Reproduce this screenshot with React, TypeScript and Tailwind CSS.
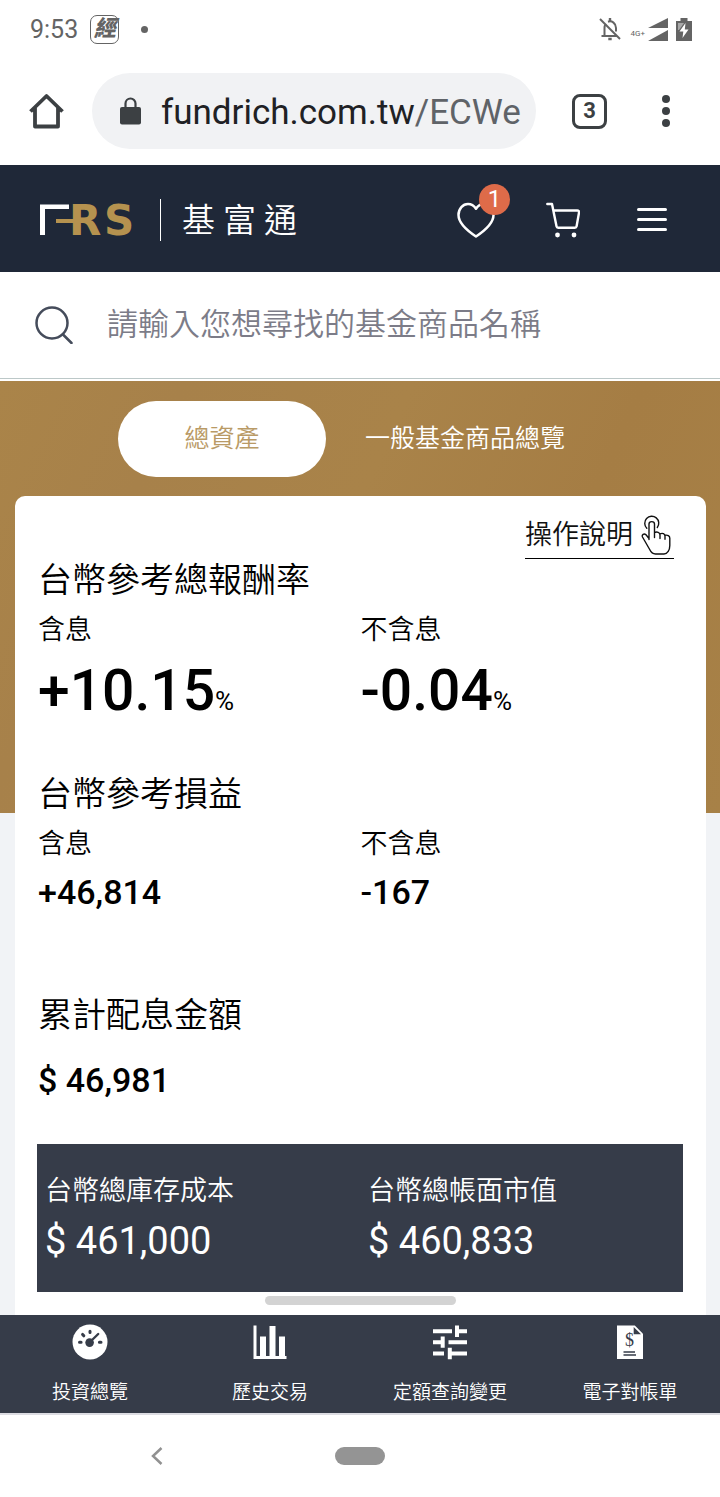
import type { ReactNode } from 'react'

const GaugeIcon = () => (
  <svg viewBox="0 0 36 36" className="h-[36px] w-[36px]" aria-hidden="true">
    <circle cx="18" cy="18" r="17.5" fill="#fff" />
    <g stroke="#363c49" strokeWidth="3" strokeLinecap="round">
      <path d="M7.5 18.2h1.6M27.4 18.2h1.6M18 7.2v1.4M10.6 10.4l1.2 1.4" />
      <path d="M18 18l8.2-8" strokeWidth="2.4" />
    </g>
    <circle cx="17.6" cy="18.6" r="4.3" fill="#363c49" />
  </svg>
)

const BarsIcon = () => (
  <svg viewBox="0 0 36 36" className="h-[36px] w-[36px]" fill="#fff" aria-hidden="true">
    <path d="M1.5 1.5h3v30.500h30v3h-33zM8 12.500h6v19.500h-6zM17.500 2h6v30h-6zM27 12.500h6v19.500h-6z" />
  </svg>
)

const SlidersIcon = () => (
  <svg viewBox="0 0 36 36" className="h-[36px] w-[36px]" fill="#fff" aria-hidden="true">
    <path d="M1 5.300h19v3.900h-19zM23 1.500h4v3.800h8v3.900h-8v3.800h-4zM16.500 16.300h18.500v3.900h-18.500zM1 16.300h7.700v-3.800h4v11.200h-4v-3.500h-7.700zM1 27.500h11v3.900h-11zM15.800 23.700h4v3.800h15.200v3.900h-15.200v3.800h-4z" />
  </svg>
)

const StatementIcon = () => (
  <svg viewBox="0 0 36 36" className="h-[36px] w-[36px]" aria-hidden="true">
    <path d="M5 1.500h17.800l8.200 8.300v25.200h-26z" fill="#fff" />
    <path d="M21.700 3v7.200h7.300z" fill="#363c49" />
    <text x="17.500" y="22" textAnchor="middle" fontFamily="Liberation Serif" fontSize="18" fill="#363c49">
      $
    </text>
    <path d="M11.500 28h11.500M11.500 31h12.500" stroke="#363c49" strokeWidth="1.300" />
  </svg>
)

const returns = [
  { label: '含息', value: '+10.15' },
  { label: '不含息', value: '-0.04' },
]

const profits = [
  { label: '含息', value: '+46,814' },
  { label: '不含息', value: '-167' },
]

const holdings = [
  { label: '台幣總庫存成本', value: '$ 461,000' },
  { label: '台幣總帳面市值', value: '$ 460,833' },
]

const tabs: { label: string; icon: ReactNode }[] = [
  { label: '投資總覽', icon: <GaugeIcon /> },
  { label: '歷史交易', icon: <BarsIcon /> },
  { label: '定額查詢變更', icon: <SlidersIcon /> },
  { label: '電子對帳單', icon: <StatementIcon /> },
]

function StatusBar() {
  return (
    <div className="flex h-[58px] items-center pr-[28px] pl-[30px] text-[#646464]">
      <span className="pt-[2px] text-[25px] leading-[30px]">9:53</span>
      <span className="ml-[12px] flex h-[29px] w-[29px] items-center justify-center rounded-[7px] border border-[#646464] text-[22px] leading-[26px] font-black italic">
        經
      </span>
      <span className="ml-[22px] h-[7px] w-[7px] rounded-full bg-[#646464]" />

      <div className="ml-auto flex items-end">
        <svg viewBox="0 0 24 24" className="h-[24px] w-[24px]" fill="none" stroke="currentColor" strokeWidth="2" aria-hidden="true">
          <path d="M2 2l20 20" />
          <path d="M3.500 19h15.500M6.500 19v-8c0-1.600.4-2.900 1.200-4M10 4.700c4-1.300 8 1.700 8 6.300v3.500" />
          <path d="M12 1v3M10.300 22h3.400" strokeWidth="2.400" />
        </svg>
        <span className="ml-[9px] text-[8px] leading-[14px]">4G+</span>
        <svg viewBox="0 0 20 23" className="ml-[3px] h-[23px] w-[20px]" fill="currentColor" aria-hidden="true">
          <path d="M20 0v10h-20zM20 12v11h-20z" />
        </svg>
        <svg viewBox="0 0 16 23" className="ml-[8px] h-[23px] w-[16px]" fill="currentColor" aria-hidden="true">
          <path d="M0 3h4.500v-3h7v3h4.500v20h-16z" />
          <path d="M2 5h6l-5 7h-1z" fill="#a8a8a8" />
          <path d="M9.500 5l-6 8.500h3.800l-.8 6.500 6-8.500h-3.700z" fill="#fff" />
        </svg>
      </div>
    </div>
  )
}

function BrowserBar() {
  return (
    <div className="flex h-[107px] items-center pr-[50px] pb-[1px] pl-[29px] text-[#3c4043]">
      <button aria-label="Home">
        <svg viewBox="0 0 35 36" className="h-[36px] w-[35px]" fill="none" stroke="currentColor" strokeWidth="3.800" strokeLinejoin="round" aria-hidden="true">
          <path d="M1.500 18.500l16-15.500 16 15.500M6 15v18.500h23v-18.500" />
        </svg>
      </button>
      <button className="ml-[28px] flex h-[76px] min-w-0 flex-1 items-center rounded-full bg-[#f1f2f4] pr-[8px] pl-[28px] text-left">
        <svg viewBox="0 0 21 28" className="h-[28px] w-[21px] shrink-0" aria-hidden="true">
          <rect y="10" width="21" height="17.500" rx="2" fill="currentColor" />
          <path d="M5.500 11v-4.500a5 5 0 0 1 10 0v4.500" fill="none" stroke="currentColor" strokeWidth="2.200" />
        </svg>
        <span className="ml-[20px] min-w-0 flex-1 overflow-hidden pt-[3px] text-[35px] leading-[48px] whitespace-nowrap text-[#202124]">
          fundrich.com.tw<span className="text-[#5f6368]">/ECWe</span>
        </span>
      </button>
      <button className="ml-[36px] flex h-[35px] w-[35px] items-center justify-center rounded-[8px] border-[3px] border-[#3c4043] text-[22px] leading-[24px] font-bold">
        3
      </button>
      <button aria-label="More" className="ml-[55px] flex flex-col gap-[4px]">
        <span className="h-[8px] w-[8px] rounded-full bg-[#3c4043]" />
        <span className="h-[8px] w-[8px] rounded-full bg-[#3c4043]" />
        <span className="h-[8px] w-[8px] rounded-full bg-[#3c4043]" />
      </button>
    </div>
  )
}

function SiteHeader() {
  return (
    <header className="flex h-[107px] items-center bg-[#1f2838] pt-[2px] pr-[53px] pl-[40px] text-white">
      <a href="#" className="flex items-center">
        <svg viewBox="0 0 100 32" className="h-[32px] w-[100px] overflow-visible" aria-hidden="true">
          <path d="M0 0.500h29v4.500h-24v26h-5z" fill="#fff" />
          <path d="M16 15h18v4h-18z" fill="#b5924f" />
          <text x="29 64" y="31" fontFamily="DejaVu Sans" fontSize="42" fontWeight="bold" fill="#b5924f">
            RS
          </text>
        </svg>
        <span className="ml-[20px] h-[42px] w-px bg-white" />
        <span className="ml-[21px] flex gap-[8px] pt-[3px] text-[33px] leading-[42px] font-[350]">
          <span>基</span>
          <span>富</span>
          <span>通</span>
        </span>
      </a>
      <div className="ml-auto flex items-center">
        <button aria-label="Favorites" className="relative">
          <svg viewBox="0 0 38 36" className="h-[36px] w-[38px]" fill="none" stroke="currentColor" strokeWidth="2.500" strokeLinejoin="round" aria-hidden="true">
            <path d="M19 34.500c-9-6-17.500-13-17.500-21.500 0-6.500 4.500-11 9.500-11 3.500 0 6 1.700 8 4.700 2-3 4.500-4.700 8-4.700 5 0 9.500 4.500 9.500 11 0 8.500-8.500 15.500-17.500 21.500z" />
          </svg>
          <span className="absolute -top-[18px] -right-[15px] flex h-[31px] w-[31px] items-center justify-center rounded-full bg-[#de6b49] text-[24px] leading-[30px]">
            1
          </span>
        </button>
        <button aria-label="Cart" className="ml-[51px]">
          <svg viewBox="0 0 34 36" className="h-[36px] w-[34px]" fill="none" stroke="currentColor" strokeWidth="2.400" strokeLinecap="round" strokeLinejoin="round" aria-hidden="true">
            <path d="M1.300 2h4.700l4.500 22.300c.2 1 .8 1.500 1.700 1.500h16.600c1 0 1.600-.5 1.800-1.500l2.400-13.500c.2-1.500-.5-2.300-1.700-2.300h-24" />
            <circle cx="11.500" cy="33" r="2.400" fill="currentColor" stroke="none" />
            <circle cx="28" cy="33" r="2.400" fill="currentColor" stroke="none" />
          </svg>
        </button>
        <button aria-label="Menu" className="ml-[57px] flex flex-col gap-[7px]">
          <span className="h-[3px] w-[30px] rounded-full bg-white" />
          <span className="h-[3px] w-[30px] rounded-full bg-white" />
          <span className="h-[3px] w-[30px] rounded-full bg-white" />
        </button>
      </div>
    </header>
  )
}

function SearchBar() {
  return (
    <div className="flex h-[109px] flex-col">
      <label className="flex flex-1 items-center border-b border-[#bcc8c8] pl-[35px]">
        <svg viewBox="0 0 38 38" className="h-[38px] w-[38px] shrink-0" fill="none" stroke="#454c5b" strokeWidth="2.500" strokeLinecap="round" aria-hidden="true">
          <circle cx="17" cy="17" r="15.500" />
          <path d="M28 28.500l8.500 8.500" />
        </svg>
        <input
          type="search"
          aria-label="搜尋"
          placeholder="請輸入您想尋找的基金商品名稱"
          className="ml-[34px] min-w-0 flex-1 text-[31px] leading-[44px] font-[350] outline-none placeholder:text-[#7c7c88]"
        />
      </label>
      <div className="h-[2px] bg-white" />
    </div>
  )
}

export default function App() {
  return (
    <div className="bg-white font-['Roboto','Noto_Sans_CJK_TC',sans-serif] text-black">
      <StatusBar />
      <BrowserBar />
      <SiteHeader />
      <SearchBar />

      <main className="bg-[#f1f3f6] bg-[linear-gradient(115deg,#aa8449_0%,#a7814a_20%,#a98349_45%,#a57d44_70%,#a78147_100%)] bg-[length:100%_432px] bg-no-repeat pt-[20px] pr-[14px] pl-[15px]">
        <div className="flex h-[76px] pl-[103px]">
          <button className="w-[208px] rounded-full bg-white text-[25px] leading-[36px] font-[350] text-[#b99a66]">
            總資產
          </button>
          <button className="ml-[39px] text-[25px] leading-[36px] font-[350] text-white">
            一般基金商品總覽
          </button>
        </div>

        <div className="mt-[19px] rounded-t-[10px] bg-white pt-[17px] pr-[23px] pb-[10px] pl-[22px]">
          <div className="flex justify-end pr-[9px]">
            <a href="#" className="flex h-[46px] items-center gap-[8px] border-b border-black pr-[3px] pb-[2px] text-[27px] leading-[36px] font-[350] text-[#111]">
              操作說明
              <svg viewBox="0 0 30 40" className="h-[40px] w-[30px]" fill="none" stroke="currentColor" strokeWidth="1.400" strokeLinecap="round" strokeLinejoin="round" aria-hidden="true">
                <path d="M5.800 13.200a7 7 0 1 1 10.500-.7" />
                <path d="M8 24.500v-15.500c0-3.200 5.500-3.200 5.500 0v8.500M13.500 22.500v-5c2.500-1 5.500-.3 5.500 2.500v3.500M19 18.800c2.500-1 5-.2 5 2.500v3M24 20.300c2.500-.6 4.800.5 4.800 3v7.200c0 4.500-2.300 8.500-5.800 8.500h-8.500c-3 0-4.500-1.700-5.800-4.500l-7.200-12.500c-1-2.300 1.500-4 3.500-2.200l3 3.700" />
              </svg>
            </a>
          </div>

          <section className="pl-px">
            <h2 className="text-[34px] leading-[42px] font-[350]">台幣參考總報酬率</h2>
            <dl className="mt-[11px] grid grid-cols-2">
              {returns.map((item) => (
                <div key={item.label}>
                  <dt className="text-[27px] leading-[36px] font-[350]">{item.label}</dt>
                  <dd className="mt-[11px] text-[57px] leading-[64px] font-medium">
                    {item.value}
                    <span className="text-[26px] leading-none font-normal">%</span>
                  </dd>
                </div>
              ))}
            </dl>
          </section>

          <section className="mt-[50px] pl-px">
            <h2 className="text-[34px] leading-[42px] font-[350]">台幣參考損益</h2>
            <dl className="mt-[11px] grid grid-cols-2">
              {profits.map((item) => (
                <div key={item.label}>
                  <dt className="text-[27px] leading-[36px] font-[350]">{item.label}</dt>
                  <dd className="mt-[8px] text-[34px] leading-[44px] font-medium">{item.value}</dd>
                </div>
              ))}
            </dl>
          </section>

          <section className="mt-[80px] pl-px">
            <h2 className="text-[34px] leading-[42px] font-[350]">累計配息金額</h2>
            <p className="mt-[22px] text-[34px] leading-[44px] font-medium">$ 46,981</p>
          </section>

          <dl className="mt-[42px] grid grid-cols-2 bg-[#363c49] pt-[29px] pb-[27px] text-white">
            {holdings.map((item) => (
              <div key={item.label} className="pl-[8px]">
                <dt className="text-[27px] leading-[36px] font-[350]">{item.label}</dt>
                <dd className="mt-[8px] text-[38px] leading-[48px]">{item.value}</dd>
              </div>
            ))}
          </dl>
          <div className="mx-auto mt-[4px] h-[9px] w-[191px] rounded-full bg-[#d3d3d3]" />
        </div>
      </main>

      <nav className="grid grid-cols-4 border-b-2 border-[#dcdce2] bg-[#363c49] pt-[9px] pb-[6px] text-white">
        {tabs.map((tab) => (
          <a key={tab.label} href="#" className="flex flex-col items-center gap-[19px]">
            {tab.icon}
            <span className="text-[19px] leading-[28px] font-[350]">{tab.label}</span>
          </a>
        ))}
      </nav>

      {/* Android system navigation */}
      <div className="grid h-[82px] grid-cols-[157fr_46fr_157fr] items-center justify-items-center">
        <button aria-label="Back">
          <svg viewBox="0 0 12 18" className="h-[18px] w-[12px]" fill="none" stroke="#919191" strokeWidth="2.500" aria-hidden="true">
            <path d="M10.500 1l-8.500 8 8.500 8" />
          </svg>
        </button>
        <button aria-label="Home screen" className="h-[18px] w-[50px] rounded-full bg-[#949494]" />
      </div>
    </div>
  )
}
